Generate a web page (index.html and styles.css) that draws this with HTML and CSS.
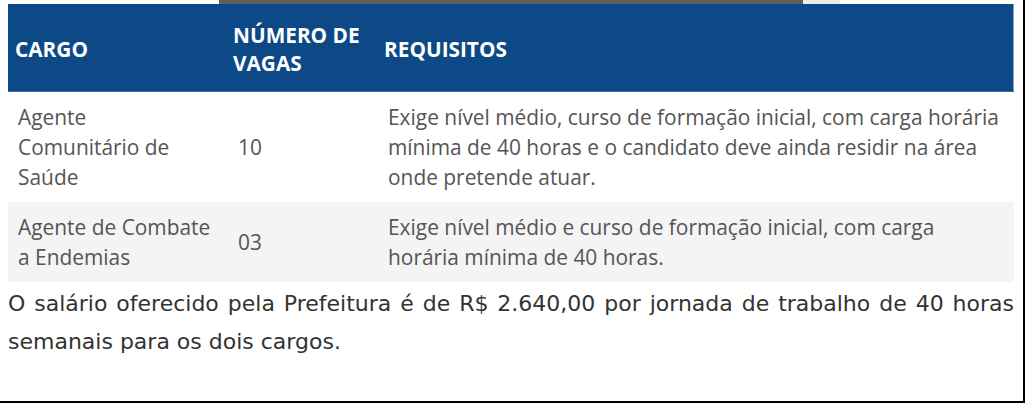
FILE: index.html
```html
<!DOCTYPE html>
<html lang="pt">
<head>
<meta charset="utf-8">
<link rel="stylesheet" href="styles.css">
</head>
<body>
<div class="frame">
  <div class="topstrip"><span class="dark"></span><span class="light"></span></div>
  <table class="vagas">
    <thead>
      <tr>
        <th class="c1">CARGO</th>
        <th class="c2">NÚMERO DE<br>VAGAS</th>
        <th class="c3">REQUISITOS</th>
      </tr>
    </thead>
    <tbody>
      <tr>
        <td>Agente<br>Comunitário de<br>Saúde</td>
        <td>10</td>
        <td>Exige nível médio, curso de formação inicial, com carga horária<br>mínima de 40 horas e o candidato deve ainda residir na área<br>onde pretende atuar.</td>
      </tr>
      <tr class="alt">
        <td>Agente de Combate<br>a Endemias</td>
        <td>03</td>
        <td>Exige nível médio e curso de formação inicial, com carga<br>horária mínima de 40 horas.</td>
      </tr>
    </tbody>
  </table>
  <p class="salario">O salário oferecido pela Prefeitura é de R$ 2.640,00 por jornada de trabalho de 40 horas semanais para os dois cargos.</p>
</div>
</body>
</html>
```
FILE: styles.css
```css
html, body { margin: 0; padding: 0; background: #fff; }
.frame {
  box-sizing: border-box;
  width: 1025px;
  height: 403px;
  border-right: 2px solid #000;
  border-bottom: 2px solid #000;
  padding-left: 8px;
  overflow: hidden;
}
.topstrip { display: flex; height: 4px; margin-left: 211px; }
.topstrip .dark { width: 584px; background: #5f5f5f; }
.topstrip .light { width: 37px; background: #ececec; }
.vagas {
  width: 1006px;
  border-collapse: collapse;
  font-family: "Open Sans", sans-serif;
  table-layout: fixed;
}
.vagas th {
  background: #0c4986;
  color: #fff;
  font-weight: 700;
  font-size: 20.8px;
  line-height: 28px;
  text-align: left;
  padding: 17px 7px 14px;
  border-bottom: 1px solid #3a6aa0;
  white-space: nowrap;
}
.vagas th.c1 { width: 206px; }
.vagas th.c2 { width: 138px; padding-left: 5px; }
.vagas th.c3 { border-right: 1px solid #8aa6c6; padding-left: 6px; }
.vagas td {
  color: #555;
  font-size: 20.9px;
  line-height: 30px;
  padding: 10px 10px;
  vertical-align: middle;
  white-space: nowrap;
}
.vagas tr.alt td { background: #f4f4f4; }
.salario {
  margin: 0;
  width: 1006px;
  font-family: "DejaVu Sans", Verdana, sans-serif;
  font-size: 22px;
  line-height: 38px;
  color: #333;
  text-align: justify;
  padding-top: 3px;
}
```
